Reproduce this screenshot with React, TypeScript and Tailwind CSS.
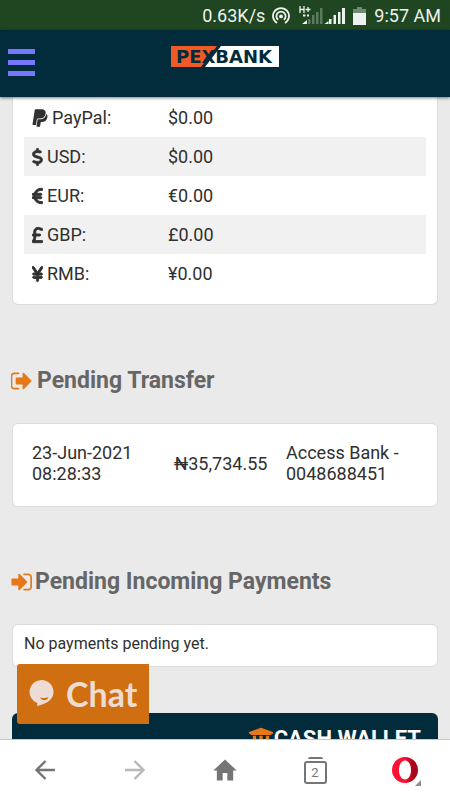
import React from "react";
import { FaPaypal, FaUniversity } from "react-icons/fa";
import { FaDollarSign, FaEuroSign, FaSterlingSign, FaYenSign } from "react-icons/fa6";

const signStyle = "h-[18px] w-[11px] stroke-current stroke-[24px]";

const balances = [
  { name: "PayPal", amount: "$0.00", icon: <FaPaypal className="h-5 w-4" /> },
  { name: "USD", amount: "$0.00", icon: <FaDollarSign className={signStyle} /> },
  { name: "EUR", amount: "€0.00", icon: <FaEuroSign className={signStyle} /> },
  { name: "GBP", amount: "£0.00", icon: <FaSterlingSign className={signStyle} /> },
  { name: "RMB", amount: "¥0.00", icon: <FaYenSign className={signStyle} /> },
];

const transfers = [
  {
    date: "23-Jun-2021 08:28:33",
    amount: "₦35,734.55",
    account: "Access Bank - 0048688451",
  },
];

const StatusBar = () => (
  <div className="flex h-[30px] shrink-0 items-center justify-end bg-[#1f4620] pr-[9px] pt-[2px] text-lg text-[#eef2ee]">
    <span>0.63K/s</span>
    <svg className="ml-[7px] h-[18px] w-[18px]" viewBox="0 0 18 18" fill="none" stroke="currentColor" strokeWidth="1.8">
      <path d="M5 16A8 8 0 1 1 13 16" />
      <path d="M6.2 12.8A4.6 4.6 0 1 1 11.8 12.8" />
      <circle cx="9" cy="9.4" r="1.9" fill="currentColor" stroke="none" />
    </svg>
    <svg className="mb-[2px] ml-[9px] h-[20px] w-[47px]" viewBox="0 0 47 20" fill="currentColor">
      <path d="M1 1v7M5 1v7M1 4.500h4M6.500 4.500h5M9 2v5" stroke="currentColor" strokeWidth="1.3" />
      <path d="M4 9.500h2.500v2H4zM8 9.500h2v2H8zM3 19l5-4v4z" />
      <path d="M9 14h2.500v5H9zM13 10h2.500v9H13zM17 7h2.500v12H17zM21 3h2.500v16H21z" opacity="0.3" />
      <path d="M25.500 19l4-3v3zM30 14h2.500v5H30zM34.500 10h2.500v9h-2.500zM39 7h2.500v12H39zM43 3h3v16h-3z" />
    </svg>
    <svg className="ml-[7px] h-[18px] w-[13px]" viewBox="0 0 13 18" fill="currentColor">
      <path d="M4 0h5v2h4v4H0V2h4z" opacity="0.4" />
      <path d="M0 6h13v12H0z" />
    </svg>
    <span className="ml-[8px]">9:57 AM</span>
  </div>
);

const Logo = () => (
  <svg className="h-[21px] w-[108px]" viewBox="0 0 108 21" role="img" aria-label="PEXBANK">
    <path d="M0 0h108v21H0z" fill="#fff" />
    <path d="M0 0h47L31 21H0z" fill="#f15a24" />
    <path d="M46 0h4L34 21h-4z" fill="#022b3c" />
    <text x="5" y="17" fill="#022b3c" className="font-['DejaVu_Sans'] text-[18px] font-bold">
      PEXBANK
    </text>
  </svg>
);

const Header = () => (
  <header className="relative z-10 grid h-[67px] shrink-0 grid-cols-[1fr_auto_1fr] items-start bg-[#022b3c] pt-[16px] shadow-[0_1px_3px_rgba(0,0,0,0.5)]">
    <button aria-label="Menu" className="ml-[8px] mt-[3px] flex w-[27px] flex-col gap-[6px]">
      <span className="h-[5px] w-full bg-[#7777fb]" />
      <span className="h-[5px] w-full bg-[#7777fb]" />
      <span className="h-[5px] w-full bg-[#7777fb]" />
    </button>
    <a href="#">
      <Logo />
    </a>
  </header>
);

const SignOutIcon = () => (
  <svg className="-ml-px h-6 w-[21px]" viewBox="96 0 1568 1792" fill="#e67817">
    <path d="M704 1440q0 4 1 20t.5 26.5-3 23.5-10 19.5-20.5 6.5h-320q-119 0-203.5-84.5t-84.5-203.5v-704q0-119 84.5-203.5t203.5-84.5h320q13 0 22.5 9.5t9.5 22.5q0 4 1 20t.5 26.5-3 23.5-10 19.5-20.5 6.5h-320q-66 0-113 47t-47 113v704q0 66 47 113t113 47h312l11.5 1 11.5 3 8 5.5 7 9 2 13.5zm928-544q0 26-19 45l-544 544q-19 19-45 19t-45-19-19-45v-288h-448q-26 0-45-19t-19-45v-384q0-26 19-45t45-19h448v-288q0-26 19-45t45-19 45 19l544 544q19 19 19 45z" />
  </svg>
);

const SignInIcon = () => (
  <svg className="-ml-px h-6 w-[21px]" viewBox="96 0 1568 1792" fill="#e67817">
    <path d="M1312 896q0 26-19 45l-544 544q-19 19-45 19t-45-19-19-45v-288h-448q-26 0-45-19t-19-45v-384q0-26 19-45t45-19h448v-288q0-26 19-45t45-19 45 19l544 544q19 19 19 45zm352-352v704q0 119-84.5 203.5t-203.5 84.5h-320q-13 0-22.5-9.5t-9.5-22.5q0-4-1-20t-.5-26.5 3-23.5 10-19.5 20.5-6.5h320q66 0 113-47t47-113v-704q0-66-47-113t-113-47h-312l-11.5-1-11.5-3-8-5.5-7-9-2-13.5q0-4-1-20t-.5-26.5 3-23.5 10-19.5 20.5-6.5h320q119 0 203.5 84.5t84.5 203.5z" />
  </svg>
);

const BrowserBar = () => (
  <nav className="grid h-[60px] shrink-0 grid-cols-5 items-center justify-items-center bg-white text-[#757575]">
    <button aria-label="Back">
      <svg className="h-6 w-6" viewBox="0 0 24 24" fill="none" stroke="currentColor" strokeWidth="2.4">
        <path d="M22 12H4M12.500 3L3.500 12l9 9" />
      </svg>
    </button>
    <button aria-label="Forward" className="text-[#b9b9b9]">
      <svg className="h-6 w-6" viewBox="0 0 24 24" fill="none" stroke="currentColor" strokeWidth="2.4">
        <path d="M2 12h18M11.500 3l9 9-9 9" />
      </svg>
    </button>
    <button aria-label="Home">
      <svg className="h-[28px] w-[28px]" viewBox="0 0 24 24" fill="currentColor">
        <path d="M10 21v-6.500h4V21h5v-8.500h3L12 3 2 12.500h3V21z" />
      </svg>
    </button>
    <button aria-label="Tabs" className="flex flex-col items-center gap-[2px]">
      <span className="h-[2px] w-[15px] rounded-t bg-[#757575]" />
      <span className="flex h-[23px] w-[23px] items-center justify-center rounded-[3px] border-2 border-[#757575] text-[13px] leading-none">
        2
      </span>
    </button>
    <button aria-label="Opera menu" className="relative">
      <svg className="h-[26px] w-[26px]" viewBox="0 0 26 26" fillRule="evenodd">
        <defs>
          <linearGradient id="opera" x1="0" x2="1" y1="0" y2="0">
            <stop offset="0.500" stopColor="#fa1232" />
            <stop offset="0.800" stopColor="#a9061b" />
          </linearGradient>
        </defs>
        <path
          d="M13 0a13 13 0 1 0 0 26 13 13 0 1 0 0-26zM13 3.500c3.500 0 6 4 6 9.500s-2.500 9.500-6 9.500-6-4-6-9.500 2.500-9.500 6-9.500z"
          fill="url(#opera)"
        />
      </svg>
      <svg className="absolute -bottom-[3px] -right-[3px] h-[6px] w-[6px]" viewBox="0 0 6 6" fill="#8f8f8f">
        <path d="M6 0v6H0z" />
      </svg>
    </button>
  </nav>
);

const App = () => {
  return (
    <div className="flex h-screen flex-col bg-[#eaeaea] font-['Roboto',sans-serif] text-[#303030]">
      <StatusBar />
      <Header />
      <main className="relative flex-1 overflow-hidden border-b border-[#c8c8c8] px-3">
        <section className="rounded-b-md border border-t-0 border-[#dcdcdc] bg-white px-[11px] pb-[11px] pt-px">
          <table className="w-full text-lg">
            <tbody>
              {balances.map((item) => (
                <tr key={item.name} className="h-[39px] even:bg-[#f1f1f1]">
                  <th scope="row" className="w-[136px] pl-2 text-left font-normal">
                    <span className="flex items-center gap-1">
                      {item.icon}
                      {item.name}:
                    </span>
                  </th>
                  <td className="pl-2">{item.amount}</td>
                </tr>
              ))}
            </tbody>
          </table>
        </section>

        <h2 className="mt-[62px] flex h-7 items-center gap-[5px] text-[23px] font-bold text-[#666]">
          <SignOutIcon />
          Pending Transfer
        </h2>
        <section className="mt-7 rounded-md border border-[#dcdcdc] bg-white px-[11px] pb-[22px] pt-[18px]">
          <table className="w-full text-lg leading-[21px]">
            <tbody>
              {transfers.map((item) => (
                <tr key={item.date}>
                  <td className="w-[142px] pl-2 pr-5">{item.date}</td>
                  <td className="w-[112px] pl-2">{item.amount}</td>
                  <td className="pl-2 pr-4">{item.account}</td>
                </tr>
              ))}
            </tbody>
          </table>
        </section>

        <h2 className="mt-[61px] flex h-7 items-center gap-[3px] text-[23px] font-bold text-[#666]">
          <SignInIcon />
          Pending Incoming Payments
        </h2>
        <section className="mt-7 rounded-md border border-[#dcdcdc] bg-white px-[11px] pb-[10px] pt-[7px]">
          <p className="text-base leading-6">No payments pending yet.</p>
        </section>

        <section className="mt-[46px] rounded-t-md bg-[#022b3c] px-[17px] pb-4 pt-[13px]">
          <h2 className="flex items-center justify-end text-[22px] font-bold leading-[26px] text-white">
            <FaUniversity className="h-[26px] w-[26px] text-[#e67817]" />
            CASH WALLET
          </h2>
        </section>

        <button className="absolute bottom-[15px] left-[17px] flex h-[60px] w-[132px] items-center gap-3 rounded-l-[3px] bg-[#d06f12] pb-[2px] pl-3 font-['Lato',sans-serif] text-[34px] font-bold text-[#ecdcd3]">
          <svg className="h-[26px] w-[25px] shrink-0" viewBox="0 0 25 26">
            <path d="M12.500 0a12 12 0 0 0-4 23.300L8 26c8-2 16.500-5.500 16.500-14A12 12 0 0 0 12.500 0z" fill="currentColor" />
            <path d="M11 17.500c3 .8 6 .6 8.500-.3-1.500 3.800-6.500 4-8.500.3z" fill="#d06f12" />
          </svg>
          Chat
        </button>
      </main>
      <BrowserBar />
    </div>
  );
};

export default App;
